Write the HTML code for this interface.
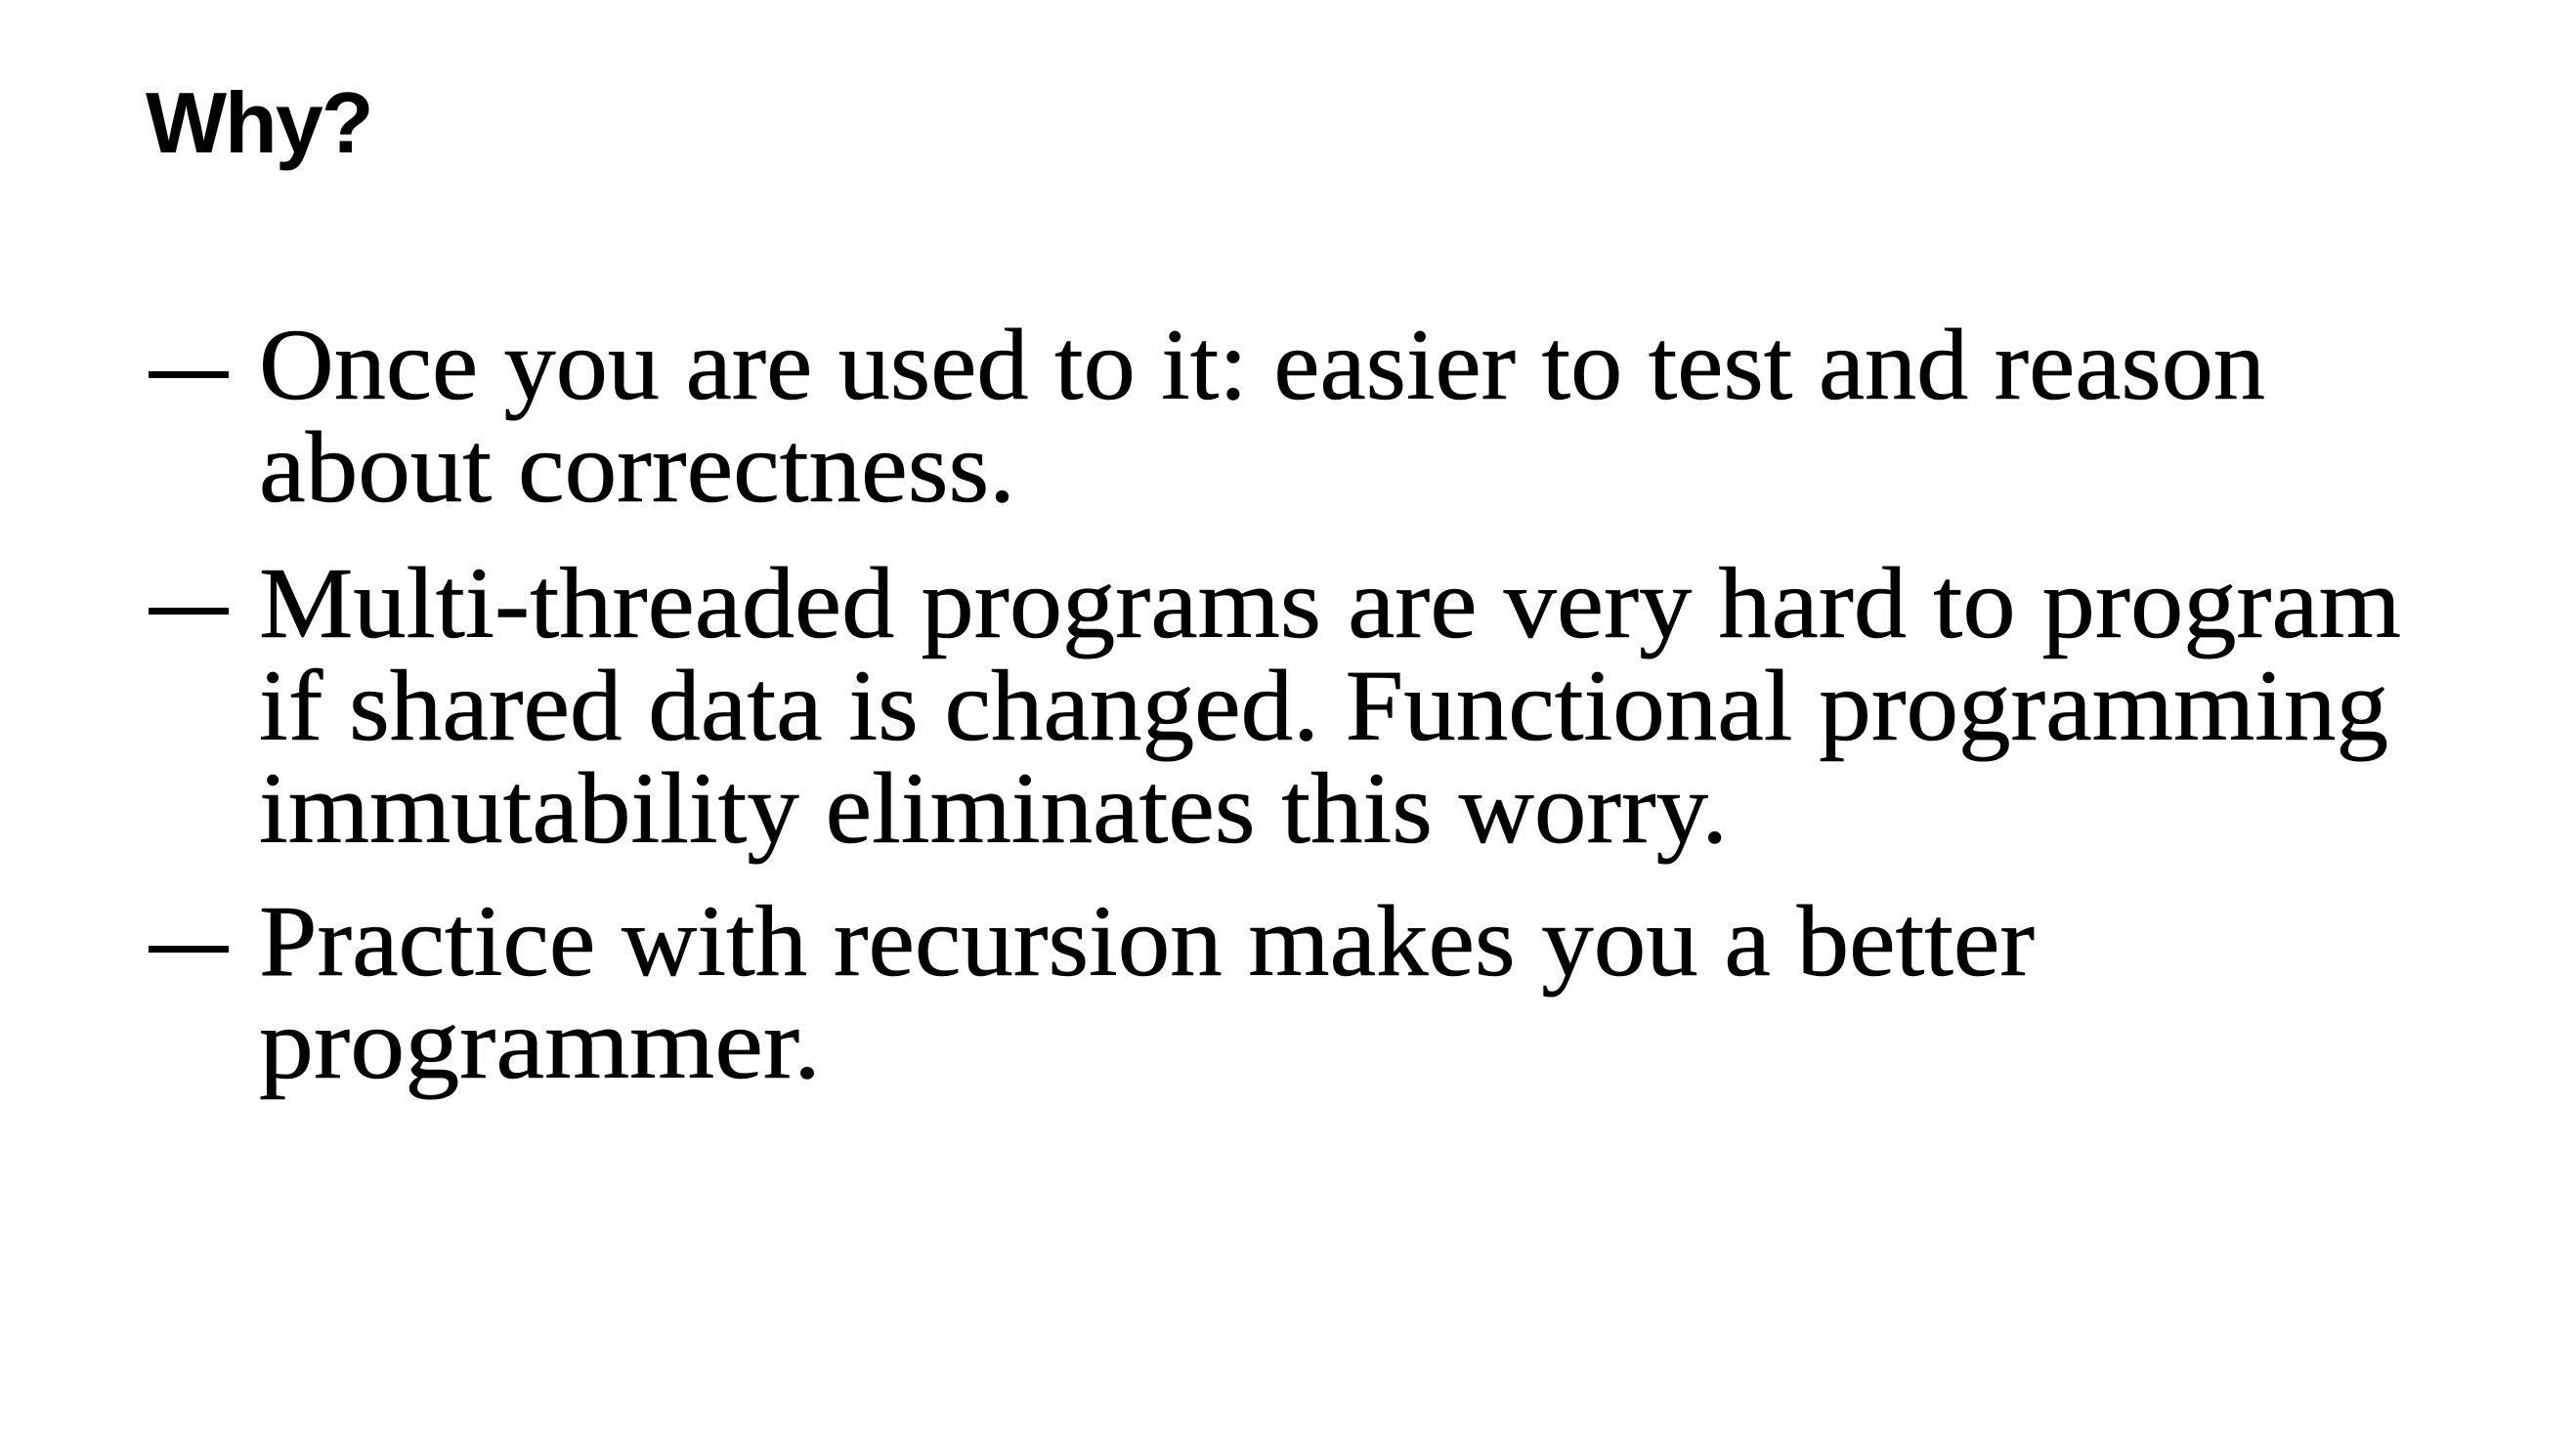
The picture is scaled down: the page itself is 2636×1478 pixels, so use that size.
<!DOCTYPE html>
<html><head><meta charset="utf-8">
<style>
html,body{margin:0;padding:0;background:#fff;width:2636px;height:1478px;overflow:hidden}
.t{position:absolute;left:149px;top:82px;font:bold 88px/1 "Liberation Sans",sans-serif;color:#000;letter-spacing:-2px}
.l{position:absolute;left:265px;font:104px/1 "Liberation Serif",serif;color:#000;white-space:nowrap;transform-origin:0 0;-webkit-text-stroke:0.6px #000}
.d{position:absolute;left:152px;width:82px;height:7px;background:#000}
</style></head><body>
<div class="t">Why?</div>
<div class="d" style="top:380px"></div>
<div class="d" style="top:622px"></div>
<div class="d" style="top:968px"></div>
<div class="l" style="top:322px" w="2053">Once you are used to it: easier to test and reason</div>
<div class="l" style="top:427px" w="774">about correctness.</div>
<div class="l" style="top:566px" w="2192">Multi-threaded programs are very hard to program</div>
<div class="l" style="top:671px" w="2179">if shared data is changed. Functional programming</div>
<div class="l" style="top:776px" w="1503">immutability eliminates this worry.</div>
<div class="l" style="top:912px" w="1817">Practice with recursion makes you a better</div>
<div class="l" style="top:1017px" w="575">programmer.</div>
<script>
document.querySelectorAll('.l').forEach(function(e){
var w=+e.getAttribute('w');var n=e.getBoundingClientRect().width;
e.style.transform='scaleX('+(w/n)+')';});
</script>
</body></html>
